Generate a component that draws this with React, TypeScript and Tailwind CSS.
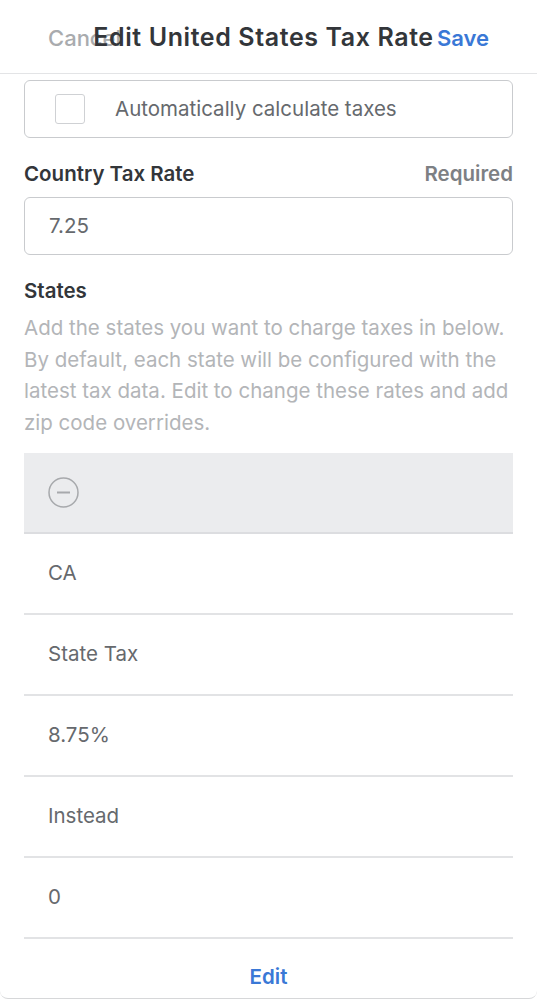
import React from "react";

export default function App() {
  const rows = ["CA", "State Tax", "8.75%", "Instead", "0"];
  return (
    <div
      className="w-[537px] h-[999px] bg-white overflow-hidden flex flex-col border-b border-[#d6d7d9] rounded-b-[8px]"
      style={{ fontFamily: "Inter, 'Liberation Sans', sans-serif" }}
    >
      <div className="relative h-[74px] border-b border-[#e3e4e6] flex items-center justify-center shrink-0">
        <span className="absolute left-[48px] top-[22px] text-[22px] text-[#a9abae] font-medium">Cancel</span>
        <span className="relative text-[25px] font-semibold text-[#33363a] tracking-[0.6px] mt-[2px] mr-[10px]">
          Edit United States Tax Rate
        </span>
        <span className="absolute right-[48px] top-[22px] text-[22px] text-[#3a78d6] font-semibold">Save</span>
      </div>
      <div className="px-[24px] pt-[6px] flex flex-col">
        <div className="h-[58px] border border-[#c9cbce] rounded-[6px] flex items-center pl-[30px]">
          <div className="w-[30px] h-[30px] border border-[#cfd1d4] rounded-[3px]" />
          <span className="ml-[30px] text-[20.5px] text-[#66696d]">Automatically calculate taxes</span>
        </div>
        <div className="flex justify-between items-center mt-[23px] h-[26px]">
          <span className="text-[20.5px] font-semibold text-[#33363a]">Country Tax Rate</span>
          <span className="text-[20.5px] font-semibold text-[#7d8084]">Required</span>
        </div>
        <div className="mt-[10px] h-[58px] border border-[#c9cbce] rounded-[6px] flex items-center pl-[24px]">
          <span className="text-[20.5px] text-[#66696d]">7.25</span>
        </div>
        <div className="mt-[23px] h-[26px] flex items-center">
          <span className="text-[20.5px] font-semibold text-[#33363a]">States</span>
        </div>
        <p className="mt-[8px] text-[20.5px] leading-[31.7px] text-[#b3b5b8]">
          Add the states you want to charge taxes in below. By default, each state will be configured with the latest tax data. Edit to change these rates and add zip code overrides.
        </p>
        <div className="mt-[14px] h-[81px] bg-[#ebecee] border-b-2 border-[#dcdde0] flex items-center pl-[24px]">
          <svg width="31" height="31" viewBox="0 0 31 31">
            <circle cx="15.5" cy="15.5" r="14.5" fill="none" stroke="#a7a9ac" strokeWidth="1.5" />
            <line x1="9" y1="15.5" x2="22" y2="15.5" stroke="#a7a9ac" strokeWidth="2" />
          </svg>
        </div>
        {rows.map((r) => (
          <div key={r} className="h-[81px] border-b-2 border-[#e2e3e5] flex items-center pl-[24px]">
            <span className="text-[20.5px] text-[#66696d]">{r}</span>
          </div>
        ))}
        <div className="h-[78px] flex items-center justify-center">
          <span className="text-[20.5px] font-semibold text-[#3a78d6]">Edit</span>
        </div>
      </div>
    </div>
  );
}
